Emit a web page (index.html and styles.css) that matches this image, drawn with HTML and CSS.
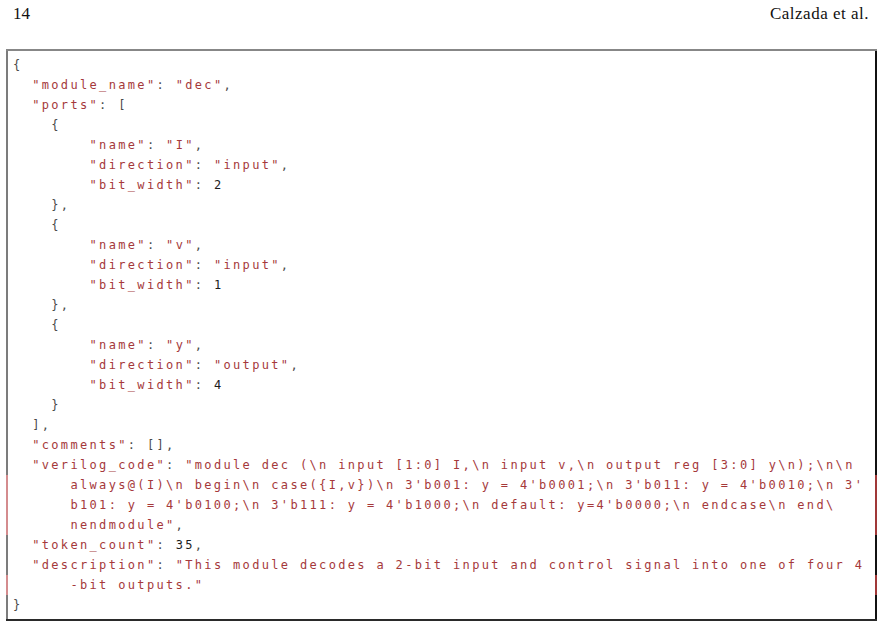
FILE: index.html
```html
<!DOCTYPE html>
<html>
<head>
<meta charset="utf-8">
<link rel="stylesheet" href="styles.css">
</head>
<body>
<div class="page">
  <header class="running-head">
    <span class="folio">14</span>
    <span class="authors">Calzada et al.</span>
  </header>
  <div class="listing">
<div class="line"><span class="p">{</span></div>
<div class="line">  <span class="s">"module_name"</span><span class="p">: </span><span class="s">"dec"</span><span class="p">,</span></div>
<div class="line">  <span class="s">"ports"</span><span class="p">: [</span></div>
<div class="line">    <span class="p">{</span></div>
<div class="line">        <span class="s">"name"</span><span class="p">: </span><span class="s">"I"</span><span class="p">,</span></div>
<div class="line">        <span class="s">"direction"</span><span class="p">: </span><span class="s">"input"</span><span class="p">,</span></div>
<div class="line">        <span class="s">"bit_width"</span><span class="p">: </span><span class="n">2</span></div>
<div class="line">    <span class="p">},</span></div>
<div class="line">    <span class="p">{</span></div>
<div class="line">        <span class="s">"name"</span><span class="p">: </span><span class="s">"v"</span><span class="p">,</span></div>
<div class="line">        <span class="s">"direction"</span><span class="p">: </span><span class="s">"input"</span><span class="p">,</span></div>
<div class="line">        <span class="s">"bit_width"</span><span class="p">: </span><span class="n">1</span></div>
<div class="line">    <span class="p">},</span></div>
<div class="line">    <span class="p">{</span></div>
<div class="line">        <span class="s">"name"</span><span class="p">: </span><span class="s">"y"</span><span class="p">,</span></div>
<div class="line">        <span class="s">"direction"</span><span class="p">: </span><span class="s">"output"</span><span class="p">,</span></div>
<div class="line">        <span class="s">"bit_width"</span><span class="p">: </span><span class="n">4</span></div>
<div class="line">    <span class="p">}</span></div>
<div class="line">  <span class="p">],</span></div>
<div class="line">  <span class="s">"comments"</span><span class="p">: [],</span></div>
<div class="line">  <span class="s">"verilog_code"</span><span class="p">: </span><span class="s">"module dec (\n input [1:0] I,\n input v,\n output reg [3:0] y\n);\n\n</span></div>
<div class="line cont">      <span class="s">always@(I)\n begin\n case({I,v})\n 3'b001: y = 4'b0001;\n 3'b011: y = 4'b0010;\n 3'</span></div>
<div class="line cont">      <span class="s">b101: y = 4'b0100;\n 3'b111: y = 4'b1000;\n default: y=4'b0000;\n endcase\n end\</span></div>
<div class="line cont">      <span class="s">nendmodule"</span><span class="p">,</span></div>
<div class="line">  <span class="s">"token_count"</span><span class="p">: </span><span class="n">35</span><span class="p">,</span></div>
<div class="line">  <span class="s">"description"</span><span class="p">: </span><span class="s">"This module decodes a 2-bit input and control signal into one of four 4</span></div>
<div class="line cont">      <span class="s">-bit outputs."</span></div>
<div class="line"><span class="p">}</span></div>
  </div>
</div>
</body>
</html>
```
FILE: styles.css
```css
html, body {
  margin: 0;
  padding: 0;
  background: #ffffff;
}

.page {
  width: 883px;
}

.running-head {
  display: flex;
  justify-content: space-between;
  align-items: baseline;
  padding: 4px 14px 0 13px;
  height: 20px;
  font-family: "Liberation Serif", "Times New Roman", serif;
  font-size: 17px;
  line-height: 20px;
  color: #111;
}

.authors {
  letter-spacing: 0.5px;
}

.listing {
  margin: 25px 6px 0 6px;
  border-top: 2px solid #878787;
  border-bottom: 2px solid #2a2a2a;
  font-family: "DejaVu Sans Mono", "Liberation Mono", monospace;
  font-size: 12px;
  letter-spacing: 2.34px;
  color: #3a3a3a;
}

.line {
  white-space: pre;
  height: 20px;
  line-height: 20px;
  padding-left: 5px;
  border-left: 2px solid #7c7c7c;
  border-right: 2px solid #111111;
  overflow: hidden;
}

.line:first-child {
  padding-top: 4px;
}

.line:last-child {
  padding-bottom: 4px;
}

.line.cont {
  border-left-color: #d48c8e;
  border-right-color: #a03838;
}

.s {
  color: #a5393b;
}

.p {
  color: #4a4a4a;
}

.n {
  color: #1c1c1c;
}
```
